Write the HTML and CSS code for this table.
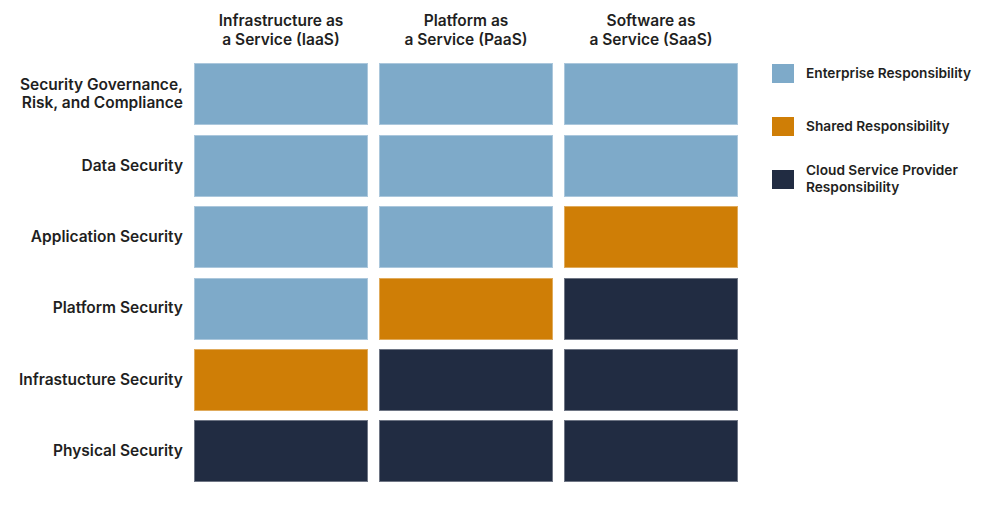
FILE: index.html
```html
<!DOCTYPE html>
<html lang="en">
<head>
<meta charset="utf-8">
<title>Shared Responsibility Model</title>
<link rel="stylesheet" href="styles.css">
</head>
<body>
<div class="page">
  <div class="matrix">
    <div class="corner"></div>
    <div class="head">Infrastructure as<br>a Service (IaaS)</div>
    <div class="head">Platform as<br>a Service (PaaS)</div>
    <div class="head">Software as<br>a Service (SaaS)</div>

    <div class="label">Security Governance,<br>Risk, and Compliance</div>
    <div class="cell ent"></div><div class="cell ent"></div><div class="cell ent"></div>

    <div class="label">Data Security</div>
    <div class="cell ent"></div><div class="cell ent"></div><div class="cell ent"></div>

    <div class="label">Application Security</div>
    <div class="cell ent"></div><div class="cell ent"></div><div class="cell shr"></div>

    <div class="label">Platform Security</div>
    <div class="cell ent"></div><div class="cell shr"></div><div class="cell csp"></div>

    <div class="label">Infrastucture Security</div>
    <div class="cell shr"></div><div class="cell csp"></div><div class="cell csp"></div>

    <div class="label">Physical Security</div>
    <div class="cell csp"></div><div class="cell csp"></div><div class="cell csp"></div>
  </div>

  <ul class="legend">
    <li class="item"><span class="swatch ent"></span><span class="item-text">Enterprise Responsibility</span></li>
    <li class="item"><span class="swatch shr"></span><span class="item-text">Shared Responsibility</span></li>
    <li class="item"><span class="swatch csp"></span><span class="item-text">Cloud Service Provider<br>Responsibility</span></li>
  </ul>
</div>
</body>
</html>
```

FILE: styles.css
```css
html, body {
  margin: 0;
  padding: 0;
  background: #ffffff;
}

body {
  font-family: Inter, "Liberation Sans", Arial, sans-serif;
  color: #1f1f22;
  width: 990px;
  height: 505px;
  overflow: hidden;
}

.page {
  display: flex;
  align-items: flex-start;
}

.matrix {
  display: grid;
  grid-template-columns: 183px 174px 174px 174px;
  grid-template-rows: 54px repeat(6, 62px);
  column-gap: 11px;
  row-gap: 9.4px;
}

.head {
  padding-top: 11px;
  text-align: center;
  font-size: 15.5px;
  font-weight: 600;
  line-height: 19px;
}

.label {
  display: flex;
  align-items: center;
  justify-content: flex-end;
  text-align: right;
  font-size: 15.5px;
  font-weight: 600;
  line-height: 18.5px;
}

.cell {
  border: 1px solid rgba(255, 255, 255, 0.35);
  box-sizing: border-box;
}

.ent { background: #7eaac9; }
.shr { background: #cf7e06; }
.csp { background: #212c42; }

.legend {
  list-style: none;
  margin: 0 0 0 34px;
  padding: 55px 0 0 0;
  display: flex;
  flex-direction: column;
  gap: 17px;
}

.item {
  height: 36px;
  display: flex;
  align-items: center;
  gap: 12px;
}

.swatch {
  width: 22px;
  height: 19px;
  flex: none;
}

.item-text {
  font-size: 13.7px;
  font-weight: 600;
  line-height: 17px;
}
```
